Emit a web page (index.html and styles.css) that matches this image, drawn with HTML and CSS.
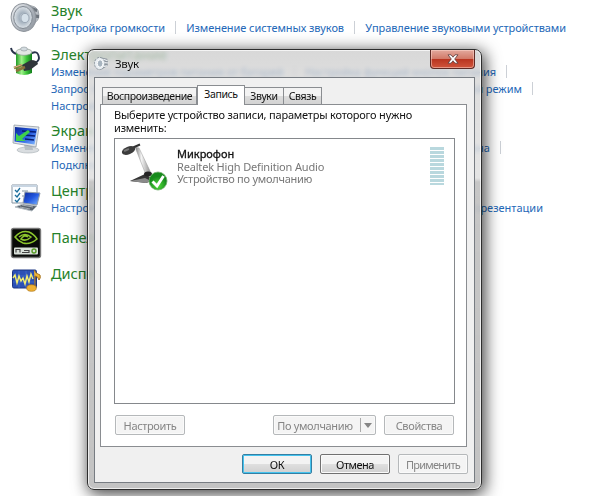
FILE: index.html
```html
<!DOCTYPE html>
<html lang="ru">
<head>
    <meta charset="UTF-8">
    <title>Звук</title>
    <link rel="stylesheet" href="styles.css">
</head>
<body>

<!-- Панель управления -->
<div class="panel">
    <div class="item item-sound">
        <svg class="icon" viewBox="0 0 32 32">
            <defs>
                <linearGradient id="metal" x1="0" y1="0" x2="1" y2="1">
                    <stop offset="0" stop-color="#f4f6f8"/>
                    <stop offset=".5" stop-color="#b4bac2"/>
                    <stop offset="1" stop-color="#8a9199"/>
                </linearGradient>
                <radialGradient id="cone">
                    <stop offset="0" stop-color="#eef4f9"/>
                    <stop offset=".4" stop-color="#a3b0bd"/>
                    <stop offset="1" stop-color="#dde3e8"/>
                </radialGradient>
            </defs>
            <path d="M16 3 L25 6 Q29 8 29 14 Q29 20 24 22 L16 29Z" fill="#b9bec4" stroke="#858b92" stroke-width=".6"/>
            <path d="M22 6l5 2v3l-4-1zM23 13l6 1v3l-6 0z" fill="#6e757d"/>
            <ellipse cx="13.500" cy="16.500" rx="12.300" ry="14" fill="url(#metal)" stroke="#8f959c" stroke-width="1" transform="rotate(-8 13.500 16.500)"/>
            <ellipse cx="13" cy="16.500" rx="9.300" ry="11" fill="url(#cone)" stroke="#7f8790" stroke-width="1"/>
            <ellipse cx="15" cy="17" rx="4" ry="4.600" fill="#d6e1ea" stroke="#93a0ad" stroke-width=".8"/>
        </svg>
        <div class="info">
            <h2>Звук</h2>
            <div class="links l1"><a>Настройка громкости</a><i></i><a>Изменение системных звуков</a><i></i><a>Управление звуковыми устройствами</a></div>
        </div>
    </div>

    <div class="item item-power">
        <svg class="icon" viewBox="0 0 32 32">
            <defs>
                <linearGradient id="cell">
                    <stop offset="0" stop-color="#1f9a25"/>
                    <stop offset=".35" stop-color="#a0f28a"/>
                    <stop offset=".65" stop-color="#3fc63c"/>
                    <stop offset="1" stop-color="#117d1b"/>
                </linearGradient>
            </defs>
            <path d="M1 3 Q2 8 7 9M20 9 Q28 4 29 13 Q29 17 22 19" fill="none" stroke="#28334a" stroke-width="1.900"/>
            <path d="M6 7 L22 7 L22 28 Q14 32 6 28Z" fill="url(#cell)"/>
            <ellipse cx="14" cy="7" rx="8" ry="3.300" fill="#e2e6e3" stroke="#8b9990" stroke-width=".7"/>
            <ellipse cx="14" cy="4" rx="3.400" ry="2" fill="#d3dbdf" stroke="#8a9398" stroke-width=".6"/>
            <path d="M12 20 L21 15 Q27 15 28 19 L20 25 L14 26Z" fill="#30363b"/>
            <path d="M4 23l8-3M6 26l9-4" stroke="#8c713c" stroke-width="2.600"/>
            <path d="M4 22.500l8-3" stroke="#ddc794" stroke-width=".9"/>
        </svg>
        <div class="info">
            <h2>Электропитание</h2>
            <div class="links l2"><a>Изменение параметров питания от батарей</a><i></i><a>Настройка функций кнопок питания</a><i></i></div>
            <div class="links l3"><a>Запрос пароля при пробуждении</a><i></i><a>Настройка перехода в спящий режим</a><i></i></div>
            <div class="links"><a>Настройка яркости</a></div>
        </div>
    </div>

    <div class="item item-screen">
        <svg class="icon" viewBox="0 0 32 32">
            <defs>
                <linearGradient id="blue" x1="0" y1="0" x2="1" y2="1">
                    <stop offset="0" stop-color="#0c2796"/>
                    <stop offset=".5" stop-color="#2257e0"/>
                    <stop offset="1" stop-color="#83bbff"/>
                </linearGradient>
            </defs>
            <ellipse cx="18" cy="28" rx="11" ry="3" fill="#d9dde0" stroke="#a5acb1" stroke-width=".6"/>
            <path d="M14 22h8l1 6h-8z" fill="#b6bec4"/>
            <path d="M4 3 L29 5 L26 25 L3 21Z" fill="#dfe4e8" stroke="#89939d" stroke-width=".7"/>
            <path d="M5 5 L27 7 L24.500 22.500 L4.500 19.500Z" fill="url(#blue)"/>
            <path d="M12 9l14 1M14 13l11 1M15 17l9 1" stroke="#061c75" stroke-width="1.300"/>
            <path d="M6 11l3 3 9-6 2 2-8 7 4 2H6z" fill="#3ed14b"/>
        </svg>
        <div class="info">
            <h2>Экран</h2>
            <div class="links l4"><a>Изменение размера текста</a><i></i><a>Настройка экрана</a><i></i></div>
            <div class="links"><a>Подключение</a></div>
        </div>
    </div>

    <div class="item item-mobile">
        <svg class="icon" viewBox="0 0 32 32">
            <path d="M2 3h25v18H2z" fill="#fbfdff" stroke="#8795a2" stroke-width="1"/>
            <path d="M2 3h25v2H2z" fill="#c8d5e2"/>
            <path d="M5 8l2 2 3-4M5 13l2 2 3-4M5 18l2 2 3-4" fill="none" stroke="#1b6e9c" stroke-width="1.300"/>
            <path d="M12 9h6M12 14h3" stroke="#7f929e"/>
            <path d="M15 10 L30 11 L27 23 L13 21Z" fill="url(#blue)" stroke="#939eaa" stroke-width="1"/>
            <path d="M13 22 L27 24 L22 29 L5 25Z" fill="#59636e" stroke="#b6bec4"/>
            <path d="M12 23l11 2M10 25l10 2" stroke="#d9dde0" stroke-width=".6"/>
        </svg>
        <div class="info">
            <h2>Центр мобильности</h2>
            <div class="links l5"><a>Настройка параметров мобильности</a><i></i><a>Настройка параметров презентации</a></div>
        </div>
    </div>

    <div class="item item-nvidia">
        <svg class="icon" viewBox="0 0 32 32">
            <rect x="1.500" y="1.500" width="29" height="29" rx="2" fill="#080a08" stroke="#777" stroke-width="1.400"/>
            <path d="M5 10 Q11 3 19 5 Q24 7 27 12 Q20 18 13 16 Q8 14 5 10Z" fill="none" stroke="#8cc62d" stroke-width="1.500"/>
            <path d="M9 10 Q15 5 21 10 Q16 15 11 12 Q14 7 18 10" fill="none" stroke="#8cc62d" stroke-width="1.500"/>
            <rect x="4" y="20.500" width="24" height="7" rx="1" fill="#d9e0d9"/>
            <path d="M6 25.500v-3h4v3M12 25.500h7v-2h-5" fill="none" stroke="#444" stroke-width="1.200"/>
            <circle cx="24" cy="24" r="2" fill="none" stroke="#589c26" stroke-width="1.400"/>
        </svg>
        <div class="info"><h2>Панель</h2></div>
    </div>

    <div class="item item-realtek">
        <svg class="icon" viewBox="0 0 32 32">
            <rect x="2.500" y="7" width="24" height="18" rx="1.500" fill="#2b50b5" stroke="#1c3683"/>
            <path d="M3 13h23M3 19h23M9 8v17M16 8v17" stroke="#4c75d2" stroke-width=".6"/>
            <path d="M3 15l2-3 2 8 2-7 2 5 2-3 2 6 2-8 2 6 2-8 2 5" fill="none" stroke="#f5ef70" stroke-width="1.400"/>
            <path d="M24 7 Q26 11 30 12 Q31 15 29 17 Q28 13 25 13 L25 24" fill="#f0b634" stroke="#a46d13" stroke-width="1"/>
            <ellipse cx="21.500" cy="25" rx="4.800" ry="3.300" fill="#efb132" stroke="#ad7415" stroke-width=".7"/>
        </svg>
        <div class="info"><h2>Диспетчер</h2></div>
    </div>
</div>

<!-- Окно "Звук" -->
<div class="window">
    <div class="titlebar">
        <svg class="title-icon" viewBox="0 0 32 32">
            <path d="M16 3 L28 6 Q32 14 28 22 L16 29Z" fill="#8c949d"/>
            <ellipse cx="12" cy="16" rx="11" ry="13" fill="#e9eef2" stroke="#89929b" stroke-width="2" stroke-dasharray="5 2"/>
            <ellipse cx="13" cy="16" rx="6" ry="8" fill="#a7b4bf" stroke="#fff" stroke-width="2"/>
            <path d="M20 7l9 3M22 14l9 1M21 22l7-1" stroke="#eef1f4" stroke-width="2.500"/>
        </svg>
        <span class="title">Звук</span>
        <button class="close">
            <svg viewBox="0 0 12 10"><path d="M1 .8h3L6 3.200 8 .8h3L7.700 5 11 9.200H8L6 6.800 4 9.200H1L4.300 5z" fill="#fff" stroke="#5b3a3a" stroke-width=".8"/></svg>
        </button>
    </div>

    <div class="client">
        <div class="tabs">
            <div class="tab tab-play">Воспроизведение</div>
            <div class="tab active">Запись</div>
            <div class="tab tab-sounds">Звуки</div>
            <div class="tab tab-comm">Связь</div>
        </div>

        <div class="page">
            <p class="hint">Выберите устройство записи, параметры которого нужно<br>изменить:</p>

            <div class="list">
                <svg class="mic" viewBox="0 0 48 48">
                    <defs>
                        <linearGradient id="arm">
                            <stop offset="0" stop-color="#777"/>
                            <stop offset=".4" stop-color="#f4f4f4"/>
                            <stop offset="1" stop-color="#8a8a8a"/>
                        </linearGradient>
                        <radialGradient id="ok" cx=".5" cy=".75">
                            <stop offset="0" stop-color="#51dc3a"/>
                            <stop offset="1" stop-color="#168a1c"/>
                        </radialGradient>
                    </defs>
                    <path d="M10 38 L25 31 L35 37 L26 40Z" fill="#353535"/>
                    <path d="M10 38 L26 40 L31 38 L25 35Z" fill="#8a8a8a"/>
                    <path d="M15 4 L19 5 L31 30 L26 32Z" fill="url(#arm)" stroke="#999" stroke-width=".5"/>
                    <ellipse cx="28" cy="31" rx="4" ry="2.500" fill="#252525"/>
                    <path d="M12 5 L20 1.500" stroke="#333" stroke-width="2"/>
                    <ellipse cx="8.500" cy="7.500" rx="7" ry="3.800" fill="#3c3c3c" transform="rotate(-22 8.500 7.500)"/>
                    <ellipse cx="6.500" cy="7" rx="3" ry="1.200" fill="#777" transform="rotate(-22 6.500 7)"/>
                    <circle cx="38" cy="38" r="9" fill="url(#ok)" stroke="#74ad6e" stroke-width=".8"/>
                    <path d="M32.500 38.500 L37 43 L43.500 33" fill="none" stroke="#fff" stroke-width="2.900"/>
                </svg>
                <div class="device">
                    <div class="name">Микрофон</div>
                    <div class="driver">Realtek High Definition Audio</div>
                    <div class="status">Устройство по умолчанию</div>
                </div>
                <div class="meter"></div>
            </div>

            <div class="actions">
                <button class="btn disabled">Настроить</button>
                <button class="btn disabled btn-default">По умолчанию<b></b></button>
                <button class="btn disabled">Свойства</button>
            </div>
        </div>

        <div class="footer">
            <button class="btn primary">ОК</button>
            <button class="btn btn-cancel">Отмена</button>
            <button class="btn disabled btn-apply">Применить</button>
        </div>
    </div>
</div>

</body>
</html>
```

FILE: styles.css
```css
* {
    box-sizing: border-box;
}

body {
    margin: 0;
    width: 600px;
    height: 496px;
    overflow: hidden;
    background: #fff;
    font-family: "Noto Sans", "Open Sans", sans-serif;
    font-size: 11px;
}

/* Панель управления */
.panel {
    padding-top: 1px;
}

.item {
    display: flex;
    padding-left: 10px;
}

.item-sound { height: 44px; }
.item-power { height: 76px; }
.item-screen { height: 60px; }
.item-mobile { height: 47px; }
.item-nvidia { height: 36px; }
.item-realtek { height: 36px; }

.icon {
    width: 32px;
    height: 32px;
    margin-right: 9px;
}

.item-screen .icon,
.item-mobile .icon {
    margin-top: 1px;
}

.item-nvidia .icon,
.item-realtek .icon {
    margin-top: -1px;
}

h2 {
    margin: 0;
    font-size: 14.5px;
    font-weight: normal;
    line-height: 18px;
    color: #26822a;
    white-space: nowrap;
}

.links {
    display: flex;
    align-items: center;
    height: 17px;
    color: #2468b8;
    white-space: nowrap;
}

.links i {
    width: 1px;
    height: 13px;
    margin: 0 10px;
    background: #ccd0d6;
}

.links i:last-child {
    margin-right: 0;
}

.l1 { width: 515px; justify-content: space-between; letter-spacing: -0.08px; }
.l2 { width: 456px; letter-spacing: -0.1px; }
.l3 { width: 482px; }
.l4 { width: 450px; }
.l5 { width: 492px; }

.l1 i {
    margin: 0;
}

.l2 a:first-child,
.l3 a:first-child,
.l4 a:first-child,
.l5 a:first-child {
    margin-right: auto;
}

/* Окно */
.window {
    position: absolute;
    left: 87px;
    top: 49px;
    width: 395px;
    height: 441px;
    padding: 0 6px 6px;
    border: 1px solid #2e2e2e;
    border-radius: 7px;
    background: linear-gradient(rgba(205, 205, 205, .78) 0, rgba(212, 212, 212, .78) 28px, rgba(222, 222, 222, .82) 128px, rgba(190, 190, 190, .88) 132px, rgba(190, 190, 190, .92));
    backdrop-filter: blur(2px);
    box-shadow: inset 0 0 0 1px rgba(255, 255, 255, .7), 2px 3px 16px 1px rgba(0, 0, 0, .75);
}

.titlebar {
    display: flex;
    height: 27px;
}

.title-icon {
    width: 15px;
    height: 15px;
    margin: 6px 6px 0 0;
}

.title {
    flex: 1;
    font-size: 11.5px;
    line-height: 27px;
    letter-spacing: -0.3px;
    color: #111;
}

.close {
    width: 45px;
    height: 19px;
    padding: 0;
    border: 1px solid #5e2a25;
    border-top: 0;
    border-radius: 0 0 4px 4px;
    background: linear-gradient(#e3a99d 0, #d27a69 48%, #b93520 52%, #d0553c 100%);
    box-shadow: inset 0 0 0 1px rgba(255, 220, 210, .5);
}

.close svg {
    display: block;
    width: 12px;
    height: 10px;
    margin: 0 auto;
}

.client {
    height: 406px;
    padding: 7px 6px 0;
    border: 1px solid #777c82;
    background: #f0f0f0;
}

/* Вкладки */
.tabs {
    display: flex;
    align-items: flex-end;
    height: 19px;
    padding-left: 1px;
}

.tab {
    display: flex;
    justify-content: center;
    align-items: center;
    height: 17px;
    border: 1px solid #8a8d91;
    border-bottom: 0;
    background: linear-gradient(#f3f3f3 50%, #dcdcdc 50%, #d3d3d3);
    font-size: 10.5px;
    letter-spacing: -0.4px;
    color: #111;
    white-space: nowrap;
}

.tab-play { width: 95px; }
.tab-sounds { width: 39px; border-left: 0; }
.tab-comm { width: 38px; border-left: 0; }

.tab.active {
    width: 48px;
    height: 20px;
    margin-bottom: -1px;
    padding-bottom: 3px;
    background: #fff;
    z-index: 1;
}

/* Страница вкладки */
.page {
    width: 367px;
    height: 343px;
    margin-left: -1px;
    padding: 3px 11px 0 13px;
    border: 1px solid #8a8d91;
    background: #fff;
}

.hint {
    margin: 0;
    height: 30px;
    line-height: 13px;
    letter-spacing: -0.2px;
    color: #111;
    white-space: nowrap;
}

.list {
    display: flex;
    width: 341px;
    height: 266px;
    padding: 4px 10px 0 5px;
    border: 1px solid #85888c;
}

.mic {
    width: 48px;
    height: 48px;
}

.device {
    flex: 1;
    padding: 5px 0 0 9px;
    line-height: 12.5px;
    color: #777;
    white-space: nowrap;
}

.name {
    color: #111;
    -webkit-text-stroke: 0.3px #111;
}

.driver { letter-spacing: -0.17px; }
.status { letter-spacing: -0.25px; }

.meter {
    width: 14px;
    height: 38px;
    margin-top: 4px;
    background: repeating-linear-gradient(#b9d8de 0 3px, #fff 3px 4px);
}

.actions {
    display: flex;
    margin: 11px 0 0 1px;
}

/* Кнопки */
.btn {
    display: flex;
    justify-content: center;
    align-items: center;
    width: 70px;
    height: 20px;
    padding: 0;
    border: 1px solid #707070;
    border-radius: 2px;
    background: linear-gradient(#f3f3f3 48%, #dfdfdf 52%, #d0d0d0);
    box-shadow: inset 0 0 0 1px #fafafa;
    font-family: inherit;
    font-size: 11px;
    letter-spacing: -0.35px;
    color: #111;
    white-space: nowrap;
}

.btn.disabled {
    border-color: #b5b8ba;
    background: #f4f4f4;
    color: #858585;
}

.btn.primary {
    border: 1px solid #347fa3;
    box-shadow: inset 0 0 0 1px #45c3ee;
}

.btn-cancel {
    letter-spacing: -0.5px;
}

.btn-apply {
    letter-spacing: -0.75px;
}

.btn-default {
    width: 103px;
    margin: 0 8px 0 88px;
}

.btn-default b {
    display: flex;
    align-items: center;
    height: 14px;
    margin-left: 7px;
    padding-left: 3px;
    border-left: 1px solid #aaa;
}

.btn-default b::after {
    content: "";
    border: 4px solid transparent;
    border-top: 5px solid #858585;
    border-bottom: 0;
}

.footer {
    display: flex;
    justify-content: flex-end;
    gap: 8px;
    padding-top: 7px;
}
```
